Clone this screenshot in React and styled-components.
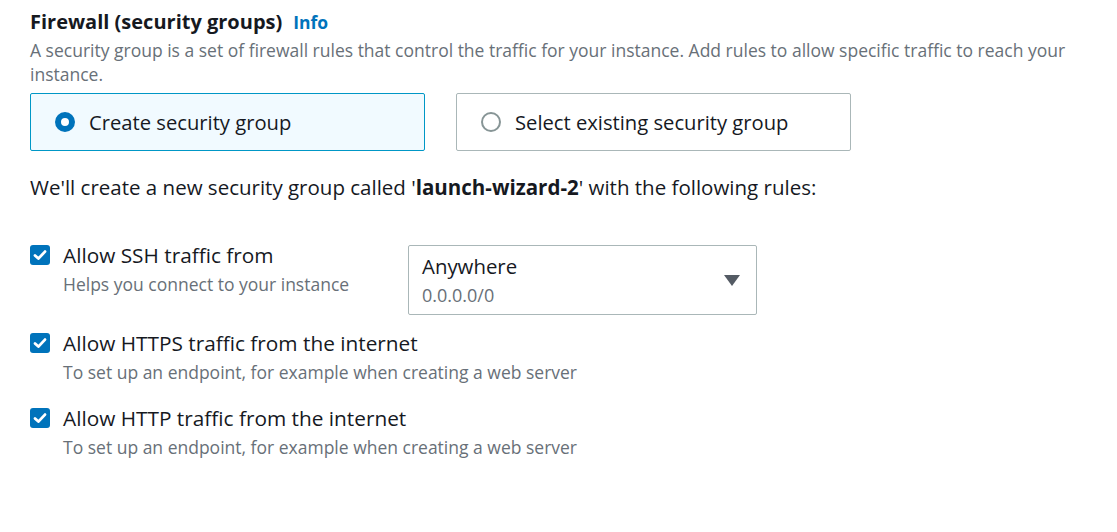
import React from "react";
import styled, { createGlobalStyle } from "styled-components";

const GlobalStyle = createGlobalStyle`
  body {
    margin: 0;
    background: #ffffff;
    font-family: "Open Sans", "Noto Sans", sans-serif;
    color: #16191f;
  }
`;

const colors = {
  text: "#16191f",
  muted: "#687078",
  blue: "#0073bb",
  border: "#aab7b8",
  tileBg: "#f1faff",
};

const rules = [
  {
    id: "ssh",
    label: "Allow SSH traffic from",
    hint: "Helps you connect to your instance",
    source: true,
  },
  {
    id: "https",
    label: "Allow HTTPS traffic from the internet",
    hint: "To set up an endpoint, for example when creating a web server",
  },
  {
    id: "http",
    label: "Allow HTTP traffic from the internet",
    hint: "To set up an endpoint, for example when creating a web server",
  },
];

export default function App() {
  return (
    <Page>
      <GlobalStyle />
      <Header>
        <Title>Firewall (security groups)</Title>
        <InfoLink href="#">Info</InfoLink>
      </Header>
      <Description>
        A security group is a set of firewall rules that control the traffic for your instance. Add rules to allow
        specific traffic to reach your instance.
      </Description>

      <Tiles>
        <Tile selected>
          <Radio selected />
          <TileLabel>Create security group</TileLabel>
        </Tile>
        <Tile>
          <Radio />
          <TileLabel>Select existing security group</TileLabel>
        </Tile>
      </Tiles>

      <Summary>
        We'll create a new security group called '<strong>launch-wizard-2</strong>' with the following rules:
      </Summary>

      <Rules>
        {rules.map(rule => (
          <Rule key={rule.id}>
            <Checkbox>
              <svg width="16" height="16" viewBox="0 0 16 16">
                <path d="M3 8.4 L6.4 11.6 L13 4.6" fill="none" stroke="#fff" strokeWidth="2.8" strokeLinecap="round" strokeLinejoin="round" />
              </svg>
            </Checkbox>
            <RuleText>
              <RuleLabel>{rule.label}</RuleLabel>
              <RuleHint>{rule.hint}</RuleHint>
            </RuleText>
            {rule.source && (
              <Select>
                <SelectValue>
                  <SelectMain>Anywhere</SelectMain>
                  <SelectSub>0.0.0.0/0</SelectSub>
                </SelectValue>
                <svg width="16" height="11" viewBox="0 0 16 11">
                  <path d="M0 0 H16 L8 11 Z" fill="#545b64" />
                </svg>
              </Select>
            )}
          </Rule>
        ))}
      </Rules>
    </Page>
  );
}

const Page = styled.div`
  padding: 10px 30px 0 30px;
`;

const Header = styled.div`
  display: flex;
  align-items: baseline;
  gap: 11px;
  height: 24px;
`;

const Title = styled.h2`
  margin: 0;
  font-size: 20px;
  line-height: 24px;
  font-weight: 700;
  color: ${colors.text};
`;

const InfoLink = styled.a`
  font-size: 17.5px;
  font-weight: 700;
  color: ${colors.blue};
  text-decoration: none;
`;

const Description = styled.p`
  margin: 4px 0 0;
  font-size: 17.5px;
  line-height: 24px;
  color: ${colors.muted};
`;

const Tiles = styled.div`
  display: flex;
  gap: 31px;
  margin-top: 7px;
`;

const Tile = styled.div`
  box-sizing: border-box;
  width: 395px;
  height: 58px;
  display: flex;
  align-items: center;
  gap: 14px;
  padding-left: 24px;
  border: 1px solid ${props => (props.selected ? "#0097c6" : colors.border)};
  border-radius: 2px;
  background: ${props => (props.selected ? colors.tileBg : "#ffffff")};
`;

const Radio = styled.span`
  box-sizing: border-box;
  width: 20px;
  height: 20px;
  border-radius: 50%;
  flex-shrink: 0;
  border: ${props => (props.selected ? `6px solid ${colors.blue}` : "2px solid #879596")};
  background: #ffffff;
`;

const TileLabel = styled.span`
  font-size: 20.2px;
  line-height: 24px;
  color: ${colors.text};
`;

const Summary = styled.p`
  margin: 24px 0 0;
  font-size: 20.5px;
  line-height: 24px;
  color: ${colors.text};

  strong {
    font-weight: 700;
  }
`;

const Rules = styled.div`
  display: flex;
  flex-direction: column;
  gap: 16px;
  margin-top: 44px;
`;

const Rule = styled.div`
  display: flex;
  align-items: flex-start;
`;

const Checkbox = styled.span`
  width: 20px;
  height: 20px;
  margin-top: 2px;
  margin-right: 13px;
  flex-shrink: 0;
  border-radius: 3px;
  background: ${colors.blue};
  display: flex;
  align-items: center;
  justify-content: center;
`;

const RuleText = styled.div`
  width: 345px;
  display: flex;
  flex-direction: column;
  gap: 5px;
  padding-bottom: 6px;
`;

const RuleLabel = styled.span`
  font-size: 20.8px;
  line-height: 24px;
  color: ${colors.text};
  white-space: nowrap;
`;

const RuleHint = styled.span`
  font-size: 17.5px;
  line-height: 24px;
  color: ${colors.muted};
  white-space: nowrap;
`;

const Select = styled.div`
  box-sizing: border-box;
  width: 349px;
  height: 70px;
  margin-top: 2px;
  display: flex;
  align-items: center;
  justify-content: space-between;
  padding: 0 16px 0 13px;
  border: 1px solid ${colors.border};
  border-radius: 2px;
`;

const SelectValue = styled.div`
  display: flex;
  flex-direction: column;
  gap: 5px;
`;

const SelectMain = styled.span`
  font-size: 20.4px;
  line-height: 24px;
  color: ${colors.text};
`;

const SelectSub = styled.span`
  font-size: 18px;
  line-height: 24px;
  color: ${colors.muted};
`;
